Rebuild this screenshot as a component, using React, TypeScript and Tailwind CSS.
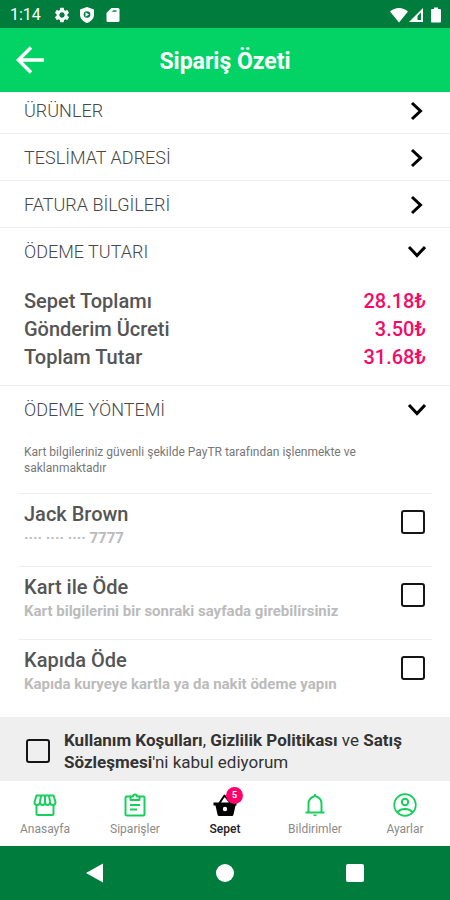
import type { ReactNode } from "react";
import { MdSettings } from "react-icons/md";

const sections = [
  { id: "products", title: "ÜRÜNLER" },
  { id: "address", title: "TESLİMAT ADRESİ" },
  { id: "billing", title: "FATURA BİLGİLERİ" },
];

const totals = [
  { label: "Sepet Toplamı", amount: "28.18" },
  { label: "Gönderim Ücreti", amount: "3.50" },
  { label: "Toplam Tutar", amount: "31.68" },
];

const methods = [
  { id: "card", title: "Jack Brown", detail: "···· ···· ···· 7777" },
  {
    id: "online",
    title: "Kart ile Öde",
    detail: "Kart bilgilerini bir sonraki sayfada girebilirsiniz",
  },
  {
    id: "door",
    title: "Kapıda Öde",
    detail: "Kapıda kuryeye kartla ya da nakit ödeme yapın",
  },
];

function StatusBar() {
  return (
    <div className="flex h-7 items-center justify-between bg-[#007d3c] pt-0.5 pl-2.5 pr-2 text-white">
      <div className="flex items-center gap-2.5">
        <span className="text-base">1:14</span>
        <MdSettings className="ml-0.5 h-[18px] w-[18px]" />
        <svg viewBox="0 0 16 16" className="-ml-0.5 h-4 w-4" fill="none">
          <path
            d="M8 0 15 2.500v5C15 11.600 11.800 14.800 8 16 4.200 14.800 1 11.600 1 7.500v-5Z"
            fill="currentColor"
          />
          <circle cx="8" cy="7.500" r="3.300" fill="#007d3c" />
          <path d="m6.500 5.300 3.600 2.200-3.600 2.200Z" fill="currentColor" />
        </svg>
        <svg viewBox="0 0 16 16" className="h-4 w-4" fill="none">
          <path
            d="M6.500 1H13a1.500 1.500 0 0 1 1.500 1.500v11A1.500 1.500 0 0 1 13 15H3a1.500 1.500 0 0 1-1.500-1.500V6Z"
            fill="currentColor"
          />
          <path d="M6.500 5h5V3h-3Z" fill="#007d3c" opacity=".7" />
        </svg>
      </div>
      <div className="flex items-center">
        <svg viewBox="0 0 18 16" className="h-4 w-[18px]" fill="currentColor">
          <path d="M0 4.500C5-.2 13-.2 18 4.500L9 15.500Z" />
        </svg>
        <svg viewBox="0 0 16 16" className="h-4 w-4" fill="none">
          <path d="M1 15 15 1v14Z" fill="currentColor" />
          <path d="M9.500 9 13 5.500V13H9.500Z" fill="#007d3c" />
        </svg>
        <svg viewBox="0 0 12 16" className="ml-1.5 h-4 w-3" fill="currentColor">
          <path d="M4 .5h4V2h2q1 0 1 1v11.500q0 1-1 1H2q-1 0-1-1V3q0-1 1-1h2Z" />
        </svg>
      </div>
    </div>
  );
}

function Header() {
  return (
    <header className="grid h-16 grid-cols-[60px_1fr_60px] items-center bg-[#03d364] text-white">
      <button type="button" aria-label="Geri" className="pl-4">
        <svg
          viewBox="0 0 28 28"
          className="h-7 w-7"
          fill="none"
          stroke="currentColor"
          strokeWidth="3.500"
        >
          <path d="M28 14H2M15 1.500 2.500 14 15 26.500" />
        </svg>
      </button>
      <h1 className="pt-1 text-center text-[23px] font-bold">Sipariş Özeti</h1>
    </header>
  );
}

function SectionRow({ title, open = false }: { title: string; open?: boolean }) {
  return (
    <button
      type="button"
      aria-expanded={open}
      className="flex h-[46px] w-full items-center justify-between px-6 pt-0.5"
    >
      <span className="text-lg font-light text-[#484848]">{title}</span>
      <svg
        viewBox="0 0 20 20"
        className="h-5 w-5"
        fill="none"
        stroke="#000"
        strokeWidth="3"
      >
        <path d={open ? "m3 5 8 8.500L19 5" : "m6 2 8.500 8L6 18"} />
      </svg>
    </button>
  );
}

function CheckBox({ id }: { id: string }) {
  return (
    <input
      id={id}
      type="checkbox"
      className="block h-6 w-6 shrink-0 appearance-none rounded-[3px] border-2 border-[#151515] checked:bg-[#03d364]"
    />
  );
}

function TabIcon({ children }: { children: ReactNode }) {
  return (
    <svg
      viewBox="0 0 24 24"
      className="h-6 w-6"
      fill="none"
      stroke="currentColor"
      strokeWidth="2"
      strokeLinejoin="round"
    >
      {children}
    </svg>
  );
}

function Tab({
  label,
  active = false,
  children,
}: {
  label: string;
  active?: boolean;
  children: ReactNode;
}) {
  return (
    <a
      href="#"
      aria-current={active ? "page" : undefined}
      className={
        active
          ? "flex flex-1 flex-col items-center gap-1 text-black"
          : "flex flex-1 flex-col items-center gap-1 text-[#18cf5e]"
      }
    >
      <span className="relative">{children}</span>
      <span
        className={
          active
            ? "text-xs font-medium text-[#222]"
            : "text-xs text-[#8a8a8a]"
        }
      >
        {label}
      </span>
    </a>
  );
}

function TabBar() {
  return (
    <nav className="flex h-[65px] bg-white pt-3">
      <Tab label="Anasayfa">
        <TabIcon>
          <path d="M3.500 12v8.500q0 1.500 1.500 1.500h14q1.500 0 1.500-1.500V12" />
          <path d="M3.500 2.500h17l2 6.500q0 3-2.700 3T17 9q0 3-2.500 3T12 9q0 3-2.500 3T7 9q0 3-2.800 3T1.500 9ZM8 2.500 7 9M12 2.500V9M16 2.500 17 9" />
        </TabIcon>
      </Tab>
      <Tab label="Siparişler">
        <TabIcon>
          <path d="M8 3.500H3.500q-1 0-1 1V21q0 1.500 1.500 1.500h16q1.500 0 1.500-1.500V4.500q0-1-1-1H16" />
          <path d="M7.500 3.500V7h9V3.500H14a2 2 0 0 0-4 0ZM7 12h10M7 16.500h7" />
        </TabIcon>
      </Tab>
      <Tab label="Sepet" active>
        <TabIcon>
          <path d="m6.500 10 5-7.500 6 7.500" />
          <path
            d="M.5 9.500h23v3h-1l-2 9q-.3 1.500-1.500 1.500h-13q-1.200 0-1.500-1.500l-2-9h-2Z"
            fill="currentColor"
            stroke="none"
          />
          <circle cx="12" cy="16" r="2.200" fill="#fff" stroke="none" />
        </TabIcon>
        <span className="absolute -top-1.5 -right-1.5 flex h-[17px] w-[17px] items-center justify-center rounded-full bg-[#ff006b] text-[9px] font-bold text-white">
          5
        </span>
      </Tab>
      <Tab label="Bildirimler">
        <TabIcon>
          <path d="M2.500 19.500h19M5.500 19v-8.500Q5.500 5 12 3q6.500 2 6.500 7.500V19M12 1v3" />
          <path
            d="M9.500 21.500h5q-2.500 3.500-5 0"
            fill="currentColor"
            stroke="none"
          />
        </TabIcon>
      </Tab>
      <Tab label="Ayarlar">
        <TabIcon>
          <circle cx="12" cy="12" r="10.800" strokeWidth="1.700" />
          <circle cx="12" cy="9" r="3.200" />
          <path d="M4.500 19.500q2-3.500 7.500-3.500t7.500 3.500" />
        </TabIcon>
      </Tab>
    </nav>
  );
}

function SystemNav() {
  return (
    <div className="grid h-[54px] grid-cols-3 items-center justify-items-center bg-[#007d3c] px-[30px] text-white">
      <button type="button" aria-label="Geri">
        <svg viewBox="0 0 20 20" className="h-5 w-5" fill="currentColor">
          <path d="M18 .5v19L1 10Z" />
        </svg>
      </button>
      <button
        type="button"
        aria-label="Ana ekran"
        className="h-[18px] w-[18px] rounded-full bg-white"
      />
      <button
        type="button"
        aria-label="Son uygulamalar"
        className="h-[18px] w-[18px] rounded-xs bg-white"
      />
    </div>
  );
}

export default function App() {
  return (
    <div className="flex min-h-screen flex-col bg-white font-[Roboto,sans-serif]">
      <StatusBar />
      <Header />

      <main className="flex-1">
        {/* List is scrolled slightly under the header */}
        <div className="-mt-[5px]">
          {sections.map((section) => (
            <div key={section.id} className="border-b border-[#eee]">
              <SectionRow title={section.title} />
            </div>
          ))}
        </div>

        <section className="border-b border-[#eee]">
          <SectionRow title="ÖDEME TUTARI" open />
          <dl className="px-6 pt-[13px] pb-3.5">
            {totals.map((total) => (
              <div
                key={total.label}
                className="flex justify-between text-xl leading-7 font-medium"
              >
                <dt className="text-[#555]">{total.label}</dt>
                <dd className="text-[#f50a68]">{total.amount}₺</dd>
              </div>
            ))}
          </dl>
        </section>

        <section>
          <SectionRow title="ÖDEME YÖNTEMİ" open />
          <p className="mr-16 ml-6 pt-3 pb-[17px] text-xs leading-4 text-[#777]">
            Kart bilgileriniz güvenli şekilde PayTR tarafından işlenmekte ve
            saklanmaktadır
          </p>
          {methods.map((method) => (
            <label
              key={method.id}
              htmlFor={method.id}
              className="mx-[18px] flex h-[73px] justify-between border-t border-[#eee] pt-2 pr-[7px] pl-1.5"
            >
              <span className="flex flex-col">
                <span className="text-xl leading-6 font-medium text-[#555]">
                  {method.title}
                </span>
                <span className="text-[15px] leading-6 font-bold text-[#bbb]">
                  {method.detail}
                </span>
              </span>
              <span className="pt-2">
                <CheckBox id={method.id} />
              </span>
            </label>
          ))}
        </section>
      </main>

      <div className="flex items-center gap-3.5 bg-[#efefef] px-[26px] pt-3 pb-2">
        <CheckBox id="terms" />
        <label
          htmlFor="terms"
          className="text-[17px] leading-[22px] text-[#333]"
        >
          <b>Kullanım Koşulları</b>, <b>Gizlilik Politikası</b> ve <b>Satış</b>{" "}
          <b>Sözleşmesi</b>'ni kabul ediyorum
        </label>
      </div>
      <TabBar />
      <SystemNav />
    </div>
  );
}
